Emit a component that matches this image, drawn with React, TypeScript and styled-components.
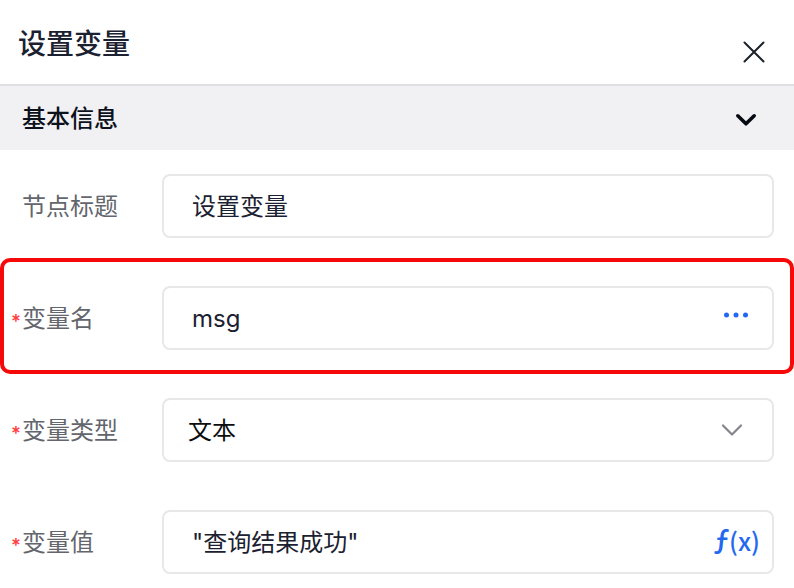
import React from "react";
import styled, { createGlobalStyle } from "styled-components";

const GlobalStyle = createGlobalStyle`
  * { box-sizing: border-box; }
  body {
    margin: 0;
    background: #fff;
    overflow: hidden;
    font-family: Inter, "Noto Sans CJK SC", sans-serif;
  }
`;

const Panel = styled.main`
  width: 794px;
  height: 588px;
  overflow: hidden;
  background: #fff;
`;

const Header = styled.header`
  display: flex;
  justify-content: space-between;
  height: 86px;
  padding: 24px 28px 0 18px;
  border-bottom: 2px solid #e0e0e4;
`;

const Title = styled.h1`
  margin: 0;
  font-size: 28px;
  line-height: 40px;
  font-weight: 500;
  color: #1b2130;
`;

const IconButton = styled.button`
  display: flex;
  align-items: center;
  justify-content: center;
  width: 24px;
  height: 24px;
  margin: 16px 0 0;
  padding: 0;
  border: 0;
  background: none;
`;

const SectionBar = styled.div`
  display: flex;
  align-items: center;
  justify-content: space-between;
  height: 64px;
  padding: 2px 36px 0 22px;
  background: #f1f1f4;
`;

const SectionTitle = styled.h2`
  margin: 0;
  font-size: 24px;
  line-height: 32px;
  font-weight: 500;
  color: #0c111b;
`;

const Row = styled.div`
  position: relative;
  display: flex;
  align-items: center;
  height: 112px;
  padding: 0 20px 0 10px;
`;

const Highlight = styled.div`
  position: absolute;
  inset: -4px 0 0;
  border: 4px solid #f60909;
  border-radius: 10px;
  pointer-events: none;
`;

const Label = styled.label`
  display: flex;
  align-items: center;
  width: 152px;
  padding-top: 2px;
  font-size: 24px;
  line-height: 36px;
  color: #63666d;
`;

const Required = styled.span`
  width: 12px;
  padding: 6px 0 0 1px;
  font-family: Inter, sans-serif;
  font-size: 19px;
  font-weight: 500;
  line-height: 28px;
  color: #ff3b3b;
`;

const Field = styled.div<{ $inset?: number; $end?: number; $color?: string }>`
  display: flex;
  flex: 1;
  align-items: center;
  justify-content: space-between;
  height: 64px;
  padding: 2px ${(p) => p.$end ?? 24}px 0 ${(p) => p.$inset ?? 28}px;
  border: 2px solid #e8e8e8;
  border-radius: 8px;
  font-size: 24px;
  line-height: 36px;
  color: ${(p) => p.$color ?? "#1b2130"};
`;

const Dots = styled.svg`
  margin-top: -8px;
`;

const Chevron = styled.svg`
  margin-top: -2px;
`;

const Formula = styled.span`
  display: flex;
  align-items: baseline;
  margin-top: -8px;
  font-family: "Noto Sans CJK SC", sans-serif;
  font-size: 25px;
  font-weight: 500;
  line-height: 32px;
  color: #2468f2;
`;

const FormulaSymbol = styled.span`
  margin-right: -1px;
  font-size: 29px;
`;

function FormRow({ label, required, highlighted, children }: {
  label: string;
  required?: boolean;
  highlighted?: boolean;
  children: React.ReactNode;
}) {
  return (
    <Row>
      <Label>
        <Required>{required ? "*" : ""}</Required>
        {label}
      </Label>
      {children}
      {highlighted && <Highlight />}
    </Row>
  );
}

export default function App() {
  return (
    <Panel>
      <GlobalStyle />
      <Header>
        <Title>设置变量</Title>
        <IconButton aria-label="关闭">
          <svg width="24" height="24" fill="none" stroke="#1c2229" strokeWidth="2" strokeLinecap="round">
            <path d="M2.5 2.5 21.5 21.5M21.5 2.5 2.5 21.5" />
          </svg>
        </IconButton>
      </Header>
      <SectionBar>
        <SectionTitle>基本信息</SectionTitle>
        <svg width="24" height="16" fill="none" stroke="#070c14" strokeWidth="3.6" strokeLinecap="round" strokeLinejoin="round">
          <path d="M3.8 4.8 12 12.8 20.2 4.8" />
        </svg>
      </SectionBar>
      <FormRow label="节点标题">
        <Field>设置变量</Field>
      </FormRow>
      <FormRow label="变量名" required highlighted>
        <Field>
          <span>msg</span>
          <Dots width="24" height="6" fill="#2468f2">
            <circle cx="2.5" cy="3" r="2.5" />
            <circle cx="12" cy="3" r="2.5" />
            <circle cx="21.5" cy="3" r="2.5" />
          </Dots>
        </Field>
      </FormRow>
      <FormRow label="变量类型" required>
        <Field $inset={24} $end={28} $color="#0c0d10">
          <span>文本</span>
          <Chevron width="24" height="16" fill="none" stroke="#84868c" strokeWidth="2.2" strokeLinecap="round" strokeLinejoin="round">
            <path d="M3 3.5 12 12.5 21 3.5" />
          </Chevron>
        </Field>
      </FormRow>
      <FormRow label="变量值" required>
        <Field $end={12}>
          <span>"查询结果成功"</span>
          <Formula>
            <FormulaSymbol>ƒ</FormulaSymbol>
            <span>(x)</span>
          </Formula>
        </Field>
      </FormRow>
    </Panel>
  );
}
